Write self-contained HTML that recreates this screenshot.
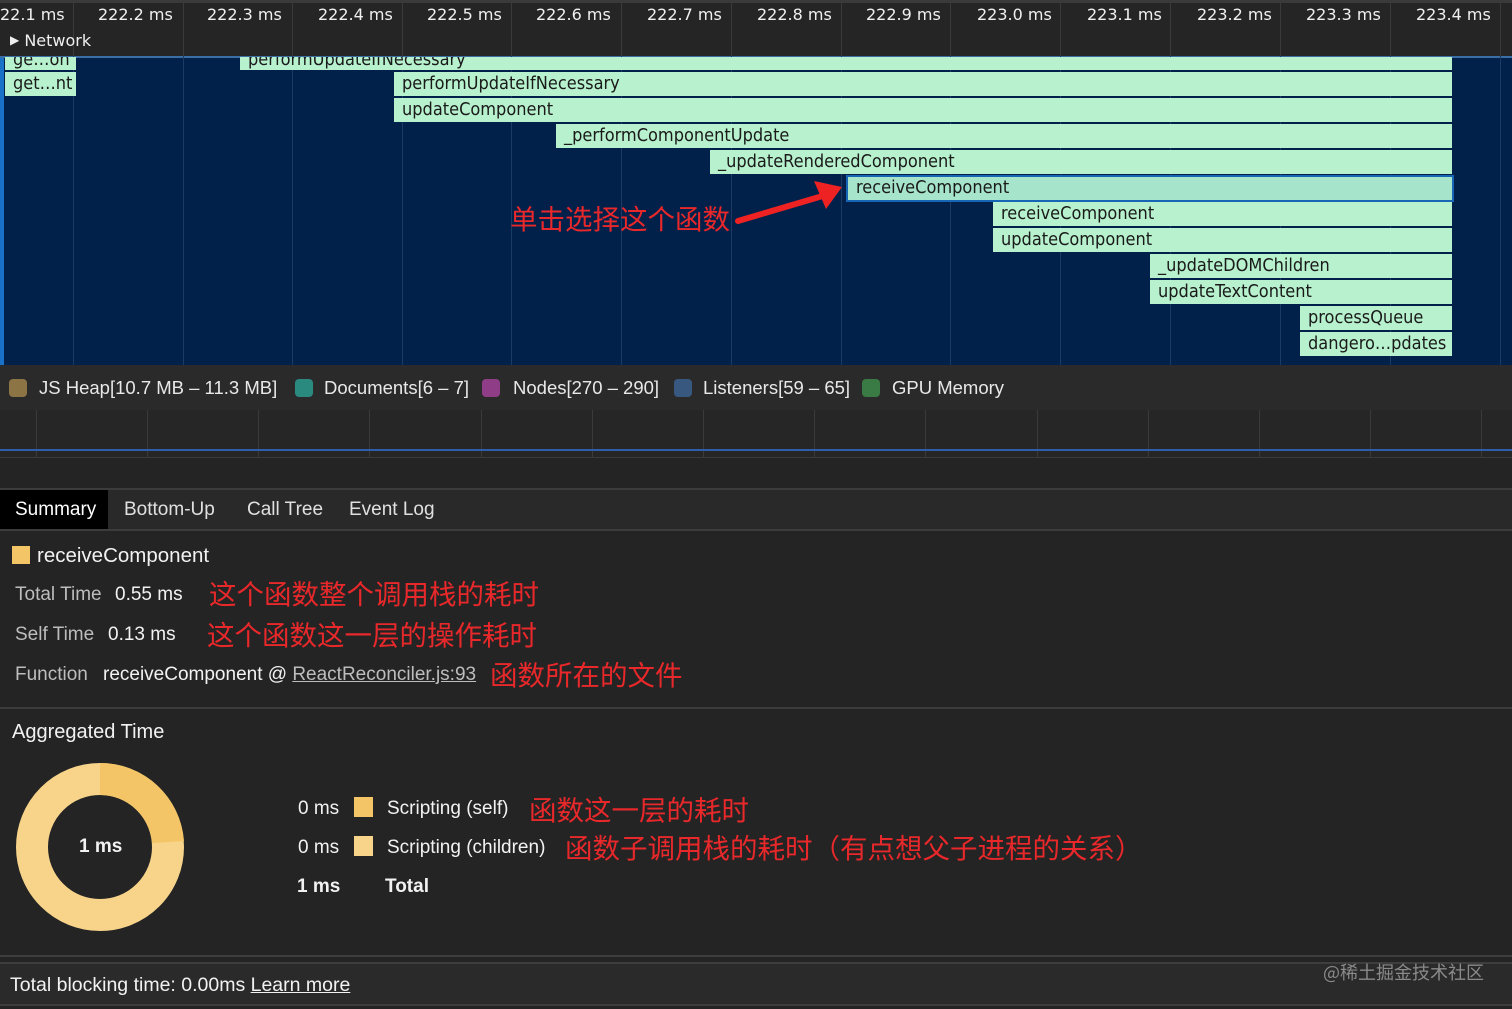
<!DOCTYPE html>
<html><head><meta charset="utf-8"><style>
*{margin:0;padding:0;box-sizing:border-box}
body{width:1512px;height:1009px;background:#242424;font-family:"Liberation Sans","Noto Sans CJK SC",sans-serif;color:#e8e8e8;position:relative;overflow:hidden}
.a{position:absolute}
.tk{position:absolute;top:5px;font-family:"DejaVu Sans",sans-serif;font-size:16px;color:#f0f0f0;white-space:nowrap}
.gl{position:absolute;width:1px;background:#3a3a3a}
.fl{position:absolute;width:1px;background:#1b3b63}
.bar{position:absolute;height:24px;background:#b7f1cd;color:#1a1a1a;font-family:"DejaVu Sans Condensed","DejaVu Sans",sans-serif;font-size:18px;line-height:24px;padding-left:8px;white-space:nowrap;overflow:hidden}
.red{position:absolute;color:#e8282a;font-family:"Noto Sans CJK SC",sans-serif;font-size:27.5px;white-space:nowrap;line-height:1}
.lg{position:absolute;top:379px;width:18px;height:18px;border-radius:4px}
.lt{position:absolute;top:377px;font-size:18.5px;color:#e8e8e8;white-space:nowrap}
.lab{position:absolute;font-size:19px;color:#bdbdbd;white-space:nowrap}
.val{position:absolute;font-size:19px;color:#f2f2f2;white-space:nowrap}
</style></head><body>
<div class="a" style="left:0;top:0;width:1512px;height:56px;background:#252525"></div>
<div class="a" style="left:0;top:0;width:1512px;height:3px;background:#3a3a3a"></div>
<div class="gl" style="left:73px;top:0;height:56px"></div>
<div class="gl" style="left:183px;top:0;height:56px"></div>
<div class="gl" style="left:292px;top:0;height:56px"></div>
<div class="gl" style="left:402px;top:0;height:56px"></div>
<div class="gl" style="left:511px;top:0;height:56px"></div>
<div class="gl" style="left:621px;top:0;height:56px"></div>
<div class="gl" style="left:731px;top:0;height:56px"></div>
<div class="gl" style="left:841px;top:0;height:56px"></div>
<div class="gl" style="left:950px;top:0;height:56px"></div>
<div class="gl" style="left:1060px;top:0;height:56px"></div>
<div class="gl" style="left:1170px;top:0;height:56px"></div>
<div class="gl" style="left:1280px;top:0;height:56px"></div>
<div class="gl" style="left:1390px;top:0;height:56px"></div>
<div class="gl" style="left:1500px;top:0;height:56px"></div>
<div class="tk" style="left:0">22.1 ms</div>
<div class="tk" style="left:98px">222.2 ms</div>
<div class="tk" style="left:207px">222.3 ms</div>
<div class="tk" style="left:318px">222.4 ms</div>
<div class="tk" style="left:427px">222.5 ms</div>
<div class="tk" style="left:536px">222.6 ms</div>
<div class="tk" style="left:647px">222.7 ms</div>
<div class="tk" style="left:757px">222.8 ms</div>
<div class="tk" style="left:866px">222.9 ms</div>
<div class="tk" style="left:977px">223.0 ms</div>
<div class="tk" style="left:1087px">223.1 ms</div>
<div class="tk" style="left:1197px">223.2 ms</div>
<div class="tk" style="left:1306px">223.3 ms</div>
<div class="tk" style="left:1416px">223.4 ms</div>
<div class="a" style="left:10px;top:31px;font-size:16px;color:#f0f0f0;font-family:'DejaVu Sans',sans-serif"><span style="font-size:12px;position:relative;top:-2px">&#9654;</span> Network</div>
<div class="a" style="left:0;top:56px;width:1512px;height:309px;background:#01214a"></div>
<div class="a" style="left:0;top:56px;width:4px;height:309px;background:#1a72c8"></div>
<div class="a" style="left:0;top:56px;width:1512px;height:2px;background:#3b6ea5"></div>
<div class="fl" style="left:73px;top:56px;height:309px"></div>
<div class="fl" style="left:183px;top:56px;height:309px"></div>
<div class="fl" style="left:292px;top:56px;height:309px"></div>
<div class="fl" style="left:402px;top:56px;height:309px"></div>
<div class="fl" style="left:511px;top:56px;height:309px"></div>
<div class="fl" style="left:621px;top:56px;height:309px"></div>
<div class="fl" style="left:731px;top:56px;height:309px"></div>
<div class="fl" style="left:841px;top:56px;height:309px"></div>
<div class="fl" style="left:950px;top:56px;height:309px"></div>
<div class="fl" style="left:1060px;top:56px;height:309px"></div>
<div class="fl" style="left:1170px;top:56px;height:309px"></div>
<div class="fl" style="left:1280px;top:56px;height:309px"></div>
<div class="fl" style="left:1390px;top:56px;height:309px"></div>
<div class="fl" style="left:1500px;top:56px;height:309px"></div>
<div class="bar" style="left:5px;top:57px;width:71px;height:13px;line-height:6px">ge…on</div>
<div class="bar" style="left:240px;top:57px;width:1212px;height:13px;line-height:6px">performUpdateIfNecessary</div>
<div class="bar" style="left:5px;top:72px;width:71px">get…nt</div>
<div class="bar" style="left:394px;top:72px;width:1058px">performUpdateIfNecessary</div>
<div class="bar" style="left:394px;top:98px;width:1058px">updateComponent</div>
<div class="bar" style="left:556px;top:124px;width:896px">_performComponentUpdate</div>
<div class="bar" style="left:710px;top:150px;width:742px">_updateRenderedComponent</div>
<div class="bar" style="left:846px;top:175px;width:608px;height:27px;background:#a6e4cb;border:2px solid #1766b5;padding-left:8px;line-height:22px">receiveComponent</div>
<div class="bar" style="left:993px;top:202px;width:459px">receiveComponent</div>
<div class="bar" style="left:993px;top:228px;width:459px">updateComponent</div>
<div class="bar" style="left:1150px;top:254px;width:302px">_updateDOMChildren</div>
<div class="bar" style="left:1150px;top:280px;width:302px">updateTextContent</div>
<div class="bar" style="left:1300px;top:306px;width:152px">processQueue</div>
<div class="bar" style="left:1300px;top:332px;width:152px">dangero…pdates</div>
<div class="red" style="left:510px;top:204px">单击选择这个函数</div>
<svg class="a" style="left:730px;top:175px" width="120" height="55"><path d="M8 46 L96 20" stroke="#ee2222" stroke-width="6" stroke-linecap="round"/><path d="M112 12 L84 6 L96 34 Z" fill="#ee2222"/></svg>
<div class="a" style="left:0;top:365px;width:1512px;height:45px;background:#2a2a2a"></div>
<div class="lg" style="left:9px;background:#8c7444"></div><div class="lt" style="left:39px">JS Heap[10.7 MB – 11.3 MB]</div>
<div class="lg" style="left:295px;background:#2a8a80"></div><div class="lt" style="left:324px">Documents[6 – 7]</div>
<div class="lg" style="left:482px;background:#8e3d86"></div><div class="lt" style="left:513px">Nodes[270 – 290]</div>
<div class="lg" style="left:674px;background:#38587f"></div><div class="lt" style="left:703px">Listeners[59 – 65]</div>
<div class="lg" style="left:862px;background:#3a7a45"></div><div class="lt" style="left:892px">GPU Memory</div>
<div class="a" style="left:0;top:410px;width:1512px;height:48px;background:#262626"></div>
<div class="gl" style="left:36px;top:410px;height:48px"></div>
<div class="gl" style="left:147px;top:410px;height:48px"></div>
<div class="gl" style="left:258px;top:410px;height:48px"></div>
<div class="gl" style="left:369px;top:410px;height:48px"></div>
<div class="gl" style="left:481px;top:410px;height:48px"></div>
<div class="gl" style="left:592px;top:410px;height:48px"></div>
<div class="gl" style="left:703px;top:410px;height:48px"></div>
<div class="gl" style="left:814px;top:410px;height:48px"></div>
<div class="gl" style="left:925px;top:410px;height:48px"></div>
<div class="gl" style="left:1037px;top:410px;height:48px"></div>
<div class="gl" style="left:1148px;top:410px;height:48px"></div>
<div class="gl" style="left:1259px;top:410px;height:48px"></div>
<div class="gl" style="left:1370px;top:410px;height:48px"></div>
<div class="gl" style="left:1481px;top:410px;height:48px"></div>
<div class="a" style="left:0;top:449px;width:1512px;height:2px;background:#2e5fae"></div>
<div class="a" style="left:0;top:457px;width:1512px;height:1px;background:#3a3a3a"></div>
<div class="a" style="left:0;top:488px;width:1512px;height:2px;background:#3c3c3c"></div>
<div class="a" style="left:0;top:490px;width:1512px;height:40px;background:#292929"></div>
<div class="a" style="left:0;top:490px;width:108px;height:40px;background:#000"></div>
<div class="a" style="left:0;top:529px;width:1512px;height:2px;background:#3c3c3c"></div>
<div class="val" style="left:15px;top:499px;color:#fff">Summary</div>
<div class="val" style="left:124px;top:499px;color:#e0e0e0">Bottom-Up</div>
<div class="val" style="left:247px;top:499px;color:#e0e0e0">Call Tree</div>
<div class="val" style="left:349px;top:499px;color:#e0e0e0">Event Log</div>
<div class="a" style="left:12px;top:546px;width:18px;height:18px;background:#f3c566"></div>
<div class="val" style="left:37px;top:544px;font-size:20.5px">receiveComponent</div>
<div class="lab" style="left:15px;top:584px">Total Time</div><div class="val" style="left:115px;top:584px">0.55 ms</div>
<div class="red" style="left:209px;top:579px">这个函数整个调用栈的耗时</div>
<div class="lab" style="left:15px;top:624px">Self Time</div><div class="val" style="left:108px;top:624px">0.13 ms</div>
<div class="red" style="left:207px;top:620px">这个函数这一层的操作耗时</div>
<div class="lab" style="left:15px;top:664px">Function</div><div class="val" style="left:103px;top:664px">receiveComponent @ <span style="color:#bdbdbd;text-decoration:underline">ReactReconciler.js:93</span></div>
<div class="red" style="left:490px;top:660px">函数所在的文件</div>
<div class="a" style="left:0;top:707px;width:1512px;height:2px;background:#3c3c3c"></div>
<div class="val" style="left:12px;top:721px;font-size:20px">Aggregated Time</div>
<svg class="a" style="left:14px;top:761px" width="172" height="172">
<circle cx="86" cy="86" r="68" fill="none" stroke="#f7d48a" stroke-width="32"/>
<path d="M86 2 A84 84 0 0 1 170 80 L138 82 A52 52 0 0 0 86 34 Z" fill="#f3c566"/>
</svg>
<div class="val" style="left:79px;top:836px;font-weight:bold">1 ms</div>
<div class="val" style="left:298px;top:798px">0 ms</div><div class="a" style="left:354px;top:797px;width:19px;height:20px;background:#f3c566"></div><div class="val" style="left:387px;top:798px">Scripting (self)</div>
<div class="red" style="left:529px;top:795px">函数这一层的耗时</div>
<div class="val" style="left:298px;top:837px">0 ms</div><div class="a" style="left:354px;top:836px;width:19px;height:20px;background:#f7d48a"></div><div class="val" style="left:387px;top:837px">Scripting (children)</div>
<div class="red" style="left:565px;top:833px">函数子调用栈的耗时（有点想父子进程的关系）</div>
<div class="val" style="left:297px;top:876px;font-weight:bold">1 ms</div><div class="val" style="left:385px;top:876px;font-weight:bold">Total</div>
<div class="a" style="left:0;top:955px;width:1512px;height:2px;background:#3e3e3e"></div>
<div class="a" style="left:0;top:962px;width:1512px;height:2px;background:#3e3e3e"></div>
<div class="a" style="left:0;top:964px;width:1512px;height:40px;background:#2a2a2a"></div>
<div class="a" style="left:0;top:1004px;width:1512px;height:2px;background:#3e3e3e"></div>
<div class="val" style="left:10px;top:974px;font-size:19.5px">Total blocking time: 0.00ms <span style="text-decoration:underline">Learn more</span></div>
<div class="a" style="left:1323px;top:959px;font-size:18px;color:#8a8a8a;font-family:'Noto Sans CJK SC',sans-serif">@稀土掘金技术社区</div>
</body></html>
